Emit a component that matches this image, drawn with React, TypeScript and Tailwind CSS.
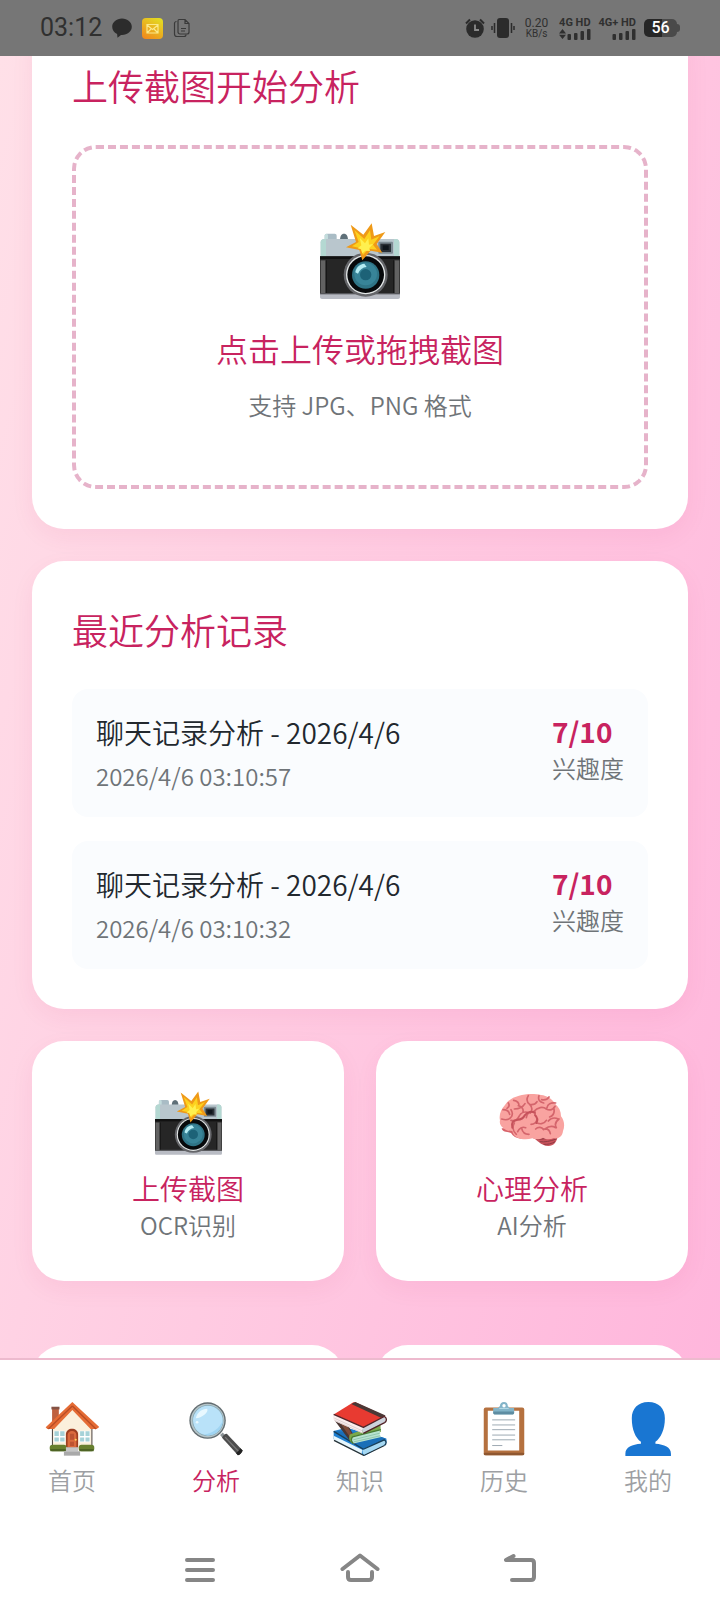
import type { ReactNode } from "react";

const RECORDS = [
    { id: 1, title: "聊天记录分析 - 2026/4/6", time: "2026/4/6 03:10:57", score: "7/10" },
    { id: 2, title: "聊天记录分析 - 2026/4/6", time: "2026/4/6 03:10:32", score: "7/10" },
];

const CameraIcon = ({ className }: { className: string }) => (
    <svg viewBox="0 0 240 228" className={className} aria-hidden="true">
        <rect x="14" y="32" width="36" height="30" rx="6" fill="#a9bcc5" />
        <rect x="14" y="32" width="10" height="30" rx="5" fill="#c3dcdc" />
        <path d="M60 52c0-12 4-20 12-20s12 8 12 20z" fill="#5f7079" />
        <path d="M2 58c0-6 4-10 10-10h216c6 0 10 4 10 10v44H2z" fill="#b9c6cd" />
        <path d="M2 58c0-6 4-10 10-10h6v54H2zM222 48h6c6 0 10 4 10 10v44h-16z" fill="#b4d8d2" />
        <rect x="0" y="100" width="240" height="114" fill="#262626" />
        <rect x="0" y="100" width="240" height="8" fill="#111" />
        <rect x="2" y="112" width="15" height="102" fill="#626262" />
        <rect x="223" y="112" width="15" height="102" fill="#626262" />
        <rect x="17" y="112" width="3" height="100" fill="#111" />
        <rect x="220" y="112" width="3" height="100" fill="#111" />
        <path d="M0 212h240v10c0 4-2 6-6 6H6c-4 0-6-2-6-6z" fill="#b9bcc4" />
        <rect x="0" y="210" width="240" height="4" fill="#55565a" />
        <rect x="175" y="56" width="44" height="36" rx="3" fill="#7d8b93" />
        <rect x="181" y="62" width="32" height="25" fill="#2a3036" />
        <rect x="188" y="67" width="18" height="14" fill="#0f161c" />
        <circle cx="137" cy="155" r="66" fill="#65666a" />
        <circle cx="137" cy="155" r="59" fill="#e4e8e8" />
        <circle cx="137" cy="155" r="55" fill="#07090b" />
        <circle cx="137" cy="156" r="41" fill="#2f7486" />
        <circle cx="137" cy="153" r="34" fill="#388498" />
        <circle cx="137" cy="155" r="17" fill="#1d6277" />
        <path d="M106 148c2-14 12-24 27-26l7 10c-12 1-21 8-26 20z" fill="#b5ecf3" />
        <path d="M92 5l38 30 25-34 7 38 34-12-26 36 17 26-35-6-25 29-9-31-40-8 30-16z" fill="#ef9a18" />
        <path d="M103 21l30 27 17-26 4 28 25-11-20 26 12 15-25-3-17 19-7-20-26-6 20-13z" fill="#fdd21f" />
        <path d="M119 44l16 17 10-15 2 19 13-3-12 13 2 9-14-1-9 8-4-12-10-3 11-9z" fill="#fff04f" />
    </svg>
);

const BrainIcon = ({ className }: { className: string }) => (
    <svg viewBox="0 0 198 192" className={className} aria-hidden="true">
        <path d="M100 140c14 4 24 24 48 25 16 0 26-12 28-30l-30-8z" fill="#c9535c" />
        <path d="M112 144c18 2 36-2 60-10M122 152c16 2 30-1 50-8M134 160c12 1 24-2 34-8" fill="none" stroke="#8e3a42" strokeWidth="3" />
        <path d="M8 112c2 12 16 10 28 14 6 10 16 16 30 17l-8-32z" fill="#d8636a" />
        <path d="M3 88C-1 72 6 54 18 42c10-16 26-24 42-28 20-6 48-6 66-2 18 2 34 12 42 26 12 10 18 22 18 38 10 12 12 30 6 44-2 16-12 24-28 22-12 4-22 4-32-2-10 6-22 6-32 2-14 4-32 4-44-2-10-4-14-10-16-20-10 0-22-2-28-10-8-6-11-14-9-22z" fill="#f9a3a0" />
        <path
            d="M12 56c10 0 18 4 20 14m-24 14c12 4 24 2 30-8 4-8 2-14-2-20M44 28c12 2 16 8 16 16m-14 10c14 0 26-6 32-16M58 44c10 2 16 10 14 18M88 14c-6 10-4 20 4 26 8 8 8 18 2 26m-2-26c10 2 18-2 22-8M120 14c-4 12 2 20 14 22m-6-10c10 2 18-2 22-8m20 18c-14-2-24 4-26 14m-40 12c12-14 28-16 38-8 10 6 22 2 26-8m-60 16c-14-2-24 6-26 18m-46 8c10 2 20-2 24-12 6-12 18-16 30-10m74-16c4 14-2 24-12 28m26 6c-12-6-24-2-30 6m32-6c-8 6-14 16-8 26M46 96c-6 12-4 26 6 34m28-20c-10-4-20 2-24 12m12-10c2 10 10 18 22 18m6-30c10 0 16-6 18-14m0 10c10 4 22 2 28-8m-32 26c8-8 18-6 24 2m0-2c12-2 18 4 20 14m-16-14c10-8 22-10 32-4M28 36c4 6 2 12-4 16"
            fill="none"
            stroke="#d4656c"
            strokeWidth="5"
            strokeLinecap="round"
        />
        <path d="M40 110c-4-14 2-22 16-24 12 0 18-6 22-14 8-10 20-12 30-6M112 96c6-10 2-18-4-24" fill="none" stroke="#c6525b" strokeWidth="6" strokeLinecap="round" />
    </svg>
);

const HouseIcon = () => (
    <svg viewBox="0 0 160 160" className="size-[54px]" aria-hidden="true">
        <path d="M21 16h20v36L21 72z" fill="#bf6140" />
        <path d="M19 14h24v8H19z" fill="#855344" />
        <path d="M22 72l59-58 58 58v72H22z" fill="#fbf0dc" />
        <path d="M22 144V74M139 144V74" stroke="#4c4440" strokeWidth="3" />
        <path d="M81 0l80 74-8 6h-18L81 24 27 80H7l-5-5z" fill="#e56c35" />
        <path d="M81 12L10 80M81 12l70 68" fill="none" stroke="#b94d26" strokeWidth="4" />
        <path d="M26 85h34v34H26zM102 85h32v34h-32z" fill="#fff" />
        <path d="M28 87h13v14H28zM45 87h13v14H45zM28 105h13v12H28zM45 105h13v12H45zM104 87h12v14h-12zM120 87h12v14h-12zM104 105h12v12h-12zM120 105h12v12h-12z" fill="#a6d2d8" />
        <path d="M62 136V96c0-22 36-22 36 0v40z" fill="#9e3f22" />
        <path d="M67 134V98c0-16 26-16 26 0v36z" fill="#db6a3d" />
        <path d="M74 94h12v18H74zM74 118h12v12H74z" fill="#bd5331" />
        <circle cx="91" cy="112" r="3" fill="#ffd45c" />
        <rect x="14" y="127" width="50" height="19" rx="8" fill="#68802f" />
        <rect x="100" y="127" width="46" height="19" rx="8" fill="#68802f" />
        <path d="M16 139h46v7H16zM102 139h42v7h-42z" fill="#4e6424" />
        <path d="M62 134h36v12H62z" fill="#c6c6c6" />
        <path d="M56 146h48v13H56z" fill="#a9a9a9" />
    </svg>
);

const MagnifierIcon = () => (
    <svg viewBox="0 0 160 160" className="size-[54px]" aria-hidden="true">
        <path d="M92 98l8-8 16 18-8 8z" fill="#8b9396" />
        <path d="M98 106c2-6 8-12 14-12l47 50c-2 6-8 13-14 14z" fill="#4d4d4d" />
        <path d="M107 104l45 48" stroke="#777" strokeWidth="4" />
        <path d="M139 151c4-2 12-9 13-14l7 7c-2 6-8 13-14 14z" fill="#222" />
        <circle cx="55" cy="55" r="54" fill="#626c70" />
        <circle cx="55" cy="55" r="50" fill="#b5c4c8" />
        <circle cx="56" cy="55" r="46" fill="#86a8b4" />
        <circle cx="56" cy="55" r="44" fill="#b9e2f9" />
        <path d="M56 99c24 0 44-20 44-44-10 24-30 38-56 42z" fill="#9fd4f2" />
        <path d="M20 48c4-17 18-28 34-28 5 10-16 28-34 28z" fill="#e8f8ff" />
        <circle cx="24" cy="60" r="4" fill="#e8f8ff" />
    </svg>
);

const BooksIcon = () => (
    <svg viewBox="0 0 160 160" className="size-[54px]" aria-hidden="true">
        <path d="M2 86l38-10 118 32c2 10 0 16-6 20l-58 31L2 110z" fill="#1f7fd0" />
        <path d="M2 86l86 54 68-32-40-14z" fill="#1a6fb8" />
        <path d="M2 100l86 42c-4 4-3 11 0 16L3 112z" fill="#e6f6fc" />
        <path d="M3 114l88 44 60-29" fill="none" stroke="#263238" strokeWidth="4" />
        <path d="M90 140l62-28c7 4 6 12 1 15l-61 29c-6-4-6-12-2-16z" fill="#a5d8f2" />
        <path d="M2 87l88 53M90 140l62-28c8 4 6 14 0 17" fill="none" stroke="#183e58" strokeWidth="4" />
        <path d="M6 56l46 62c-6-12 0-18 8-22L40 60z" fill="#4a3733" />
        <path d="M18 58l38 54 2-14-24-40z" fill="#7d4b39" />
        <path d="M50 96l90-34 2 26-84 34c-10-4-12-16-8-26z" fill="#7aa94a" />
        <path d="M58 102l84-20c-6 6-5 16 1 22l-82 19c-6-6-7-14-3-21z" fill="#b8e3cf" />
        <path d="M60 112l80-20M62 118l78-18" stroke="#7eb79f" strokeWidth="2" />
        <path d="M142 82l-84 21c-5 6-4 14 2 20" fill="none" stroke="#477c35" strokeWidth="4" />
        <path d="M2 37L58 2c4-2 8-1 12 0l86 40-66 34z" fill="#e83a31" />
        <path d="M66 0l90 40-14 7L54 6z" fill="#4b3836" />
        <path d="M2 37l88 38c-5 5-5 12-1 18L4 56C-1 50-1 42 2 37z" fill="#fbeeee" />
        <path d="M4 48l82 37M4 54l84 38" stroke="#cfc3c5" strokeWidth="2" />
        <path d="M90 75l62-31c6 4 6 12 1 16L90 92c-5-4-5-12 0-17z" fill="#cdd3dc" />
        <path d="M2 37l88 38 62-32c9 5 7 14 1 18L90 93" fill="none" stroke="#53252a" strokeWidth="4" strokeLinejoin="round" />
    </svg>
);

const ClipboardIcon = () => (
    <svg viewBox="0 0 160 160" className="size-[54px]" aria-hidden="true">
        <rect x="20" y="16" width="120" height="142" rx="6" fill="#b5713f" />
        <rect x="20" y="150" width="120" height="8" rx="4" fill="#8f5730" />
        <path d="M32 26h93v118H32z" fill="#fff" />
        <path d="M45 53h68M45 68h68M45 82h68M45 98h68M45 112h68M45 129h30" stroke="#8c9aa5" strokeWidth="2.5" />
        <path d="M80 0c8 0 12 6 11 12l6 6h13v12c0 4-2 6-6 6H54c-4 0-6-2-6-6V18h14l6-6C68 5 72 0 80 0z" fill="#83b4c8" />
        <path d="M48 28h62v3c0 4-2 6-6 6H54c-4 0-6-2-6-6z" fill="#5e8da2" />
        <circle cx="80" cy="11" r="5" fill="#fff" />
        <path d="M66 19h28" stroke="#b7dbe7" strokeWidth="3" />
    </svg>
);

const PersonIcon = () => (
    <svg viewBox="0 0 160 160" className="size-[54px]" aria-hidden="true">
        <path d="M81 0c32 0 49 20 49 48 0 34-12 58-28 70v6c26 2 46 10 46 29v7H13v-7c0-19 20-27 46-29v-6C43 106 32 82 32 48 32 20 50 0 81 0z" fill="#1976d2" />
    </svg>
);

const SignalBars = ({ arrows = false }: { arrows?: boolean }) => (
    <svg viewBox="0 0 32 11" className="h-[11px] w-8" fill="#2f2f2f" aria-hidden="true">
        {arrows && <path d="M3.5 0L7 4.5H0zM3.5 10L7 5.8H0z" />}
        <rect x="8.5" y="5" width="3.5" height="6" rx="1" />
        <rect x="15" y="4" width="3.5" height="7" rx="1" />
        <rect x="21.5" y="2" width="3.5" height="9" rx="1" />
        <rect x="28" y="0" width="3.5" height="11" rx="1" />
    </svg>
);

const StatusBar = () => (
    <header className="flex h-14 shrink-0 items-center justify-between bg-[#767676] px-10 font-[Roboto,sans-serif] font-normal text-[#303030]">
        <div className="flex items-center">
            <span className="text-[25px]">03:12</span>
            <svg viewBox="0 0 20 20" className="ml-2.5 size-5" aria-hidden="true">
                <path d="M10 .5c5.5 0 9.8 3.7 9.8 8.3S15.5 17 10 17H9l-3.5 2.7-.4-3.7C2 14.5.2 12 .2 8.8.2 4.2 4.5.5 10 .5z" fill="#2c2c2c" />
            </svg>
            <svg viewBox="0 0 21 21" className="ml-2.5 size-[21px]" aria-hidden="true">
                <defs>
                    <linearGradient id="mail" x1="0.8" y1="0" x2="0.2" y2="1">
                        <stop offset="0" stopColor="#e3dc22" />
                        <stop offset="1" stopColor="#f08b1d" />
                    </linearGradient>
                </defs>
                <rect width="21" height="21" rx="4" fill="url(#mail)" />
                <path d="M5 6.5h11v8.5H5zM5 7l5.5 4.5L16 7M5 15l4-4m7 4l-4-4" fill="none" stroke="#fbe98a" strokeWidth="1.2" />
            </svg>
            <svg viewBox="0 0 18 20" className="ml-2.5 h-5 w-[18px]" fill="none" stroke="#3a3a3a" strokeWidth="1.2" aria-hidden="true">
                <path d="M6 1.5h6l4 4V14a2 2 0 0 1-2 2H7a2 2 0 0 1-2-2V3a1.5 1.5 0 0 1 1-1.5zM12 1.5v4h4M8 10.5h5M8 13h4" />
                <path d="M3.5 3.5A2 2 0 0 0 1.5 5.5V16a2.5 2.5 0 0 0 2.5 2.5h7a2 2 0 0 0 2-2" />
            </svg>
        </div>
        <div className="flex items-center">
            <svg viewBox="0 0 20 20" className="size-5" aria-hidden="true">
                <circle cx="10" cy="11" r="8.8" fill="#2b2b2b" />
                <path d="M1 5.5L5 1.5M19 5.5l-4-4" stroke="#2b2b2b" strokeWidth="2" />
                <path d="M10 6.5V12h4" fill="none" stroke="#8a8a8a" strokeWidth="1.8" />
            </svg>
            <svg viewBox="0 0 24 20" className="ml-1.5 h-5 w-6" aria-hidden="true">
                <rect x="6" y="0" width="12" height="20" rx="3" fill="#2b2b2b" />
                <path d="M3.5 5v10M20.5 5v10M1 8v4M23 8v4" stroke="#2b2b2b" strokeWidth="1.5" />
            </svg>
            <div className="ml-2.5 flex w-6 flex-col items-center">
                <span className="text-xs leading-3">0.20</span>
                <span className="text-[10px] leading-[10px]">KB/s</span>
            </div>
            <div className="ml-2.5 flex flex-col items-end">
                <span className="text-[11px] leading-3 font-bold">4G HD</span>
                <SignalBars arrows />
            </div>
            <div className="ml-2 flex flex-col items-end">
                <span className="text-[11px] leading-3 font-bold">4G+ HD</span>
                <SignalBars />
            </div>
            <div className="ml-2 flex items-center">
                <span className="flex h-[18px] w-[33px] items-center justify-center rounded-[5px] bg-linear-to-r from-[#262626] from-55% to-[#4a4a4a] to-55% text-base font-medium text-white">
                    56
                </span>
                <span className="h-2 w-[3px] rounded-r-full bg-[#4a4a4a]" />
            </div>
        </div>
    </header>
);

const Card = ({ className = "", children }: { className?: string; children: ReactNode }) => (
    <section className={`rounded-[32px] bg-white p-10 shadow-[0_8px_24px_rgba(194,24,91,0.06)] ${className}`}>
        {children}
    </section>
);

const FEATURES = [
    { title: "上传截图", desc: "OCR识别", icon: <CameraIcon className="h-16 w-[67px]" /> },
    { title: "心理分析", desc: "AI分析", icon: <BrainIcon className="h-16 w-[66px]" /> },
];

const TABS = [
    { label: "首页", icon: <HouseIcon />, active: false },
    { label: "分析", icon: <MagnifierIcon />, active: true },
    { label: "知识", icon: <BooksIcon />, active: false },
    { label: "历史", icon: <ClipboardIcon />, active: false },
    { label: "我的", icon: <PersonIcon />, active: false },
];

const SYSTEM_KEYS = [
    { name: "菜单", d: "M7 10h26M7 20h26M7 30h26" },
    { name: "主屏幕", d: "M2.5 19L20 5.5 37.5 19M8 22v5q0 3 3 3h18q3 0 3-3v-5" },
    { name: "返回", d: "M13.5 6L6 10h25q3 0 3 3v14q0 3-3 3H12" },
];

const App = () => (
    <div className="flex h-screen flex-col bg-white font-['Noto_Sans_CJK_SC',sans-serif] font-[350]">
        <StatusBar />

        <main className="min-h-0 flex-1 overflow-hidden bg-[linear-gradient(105deg,#ffe0e8,#ffb6dc)] px-8">
            <Card className="-mt-[39px]">
                <h2 className="mb-8 text-4xl leading-14 text-[#c8235f]">上传截图开始分析</h2>
                <label className="flex cursor-pointer flex-col items-center rounded-3xl border-4 border-dashed border-[#e6b3ca] pt-[74px] pb-[62px]">
                    <CameraIcon className="h-[76px] w-20" />
                    <span className="mt-6 text-[32px] leading-[50px] text-[#c8235f]">点击上传或拖拽截图</span>
                    <span className="mt-3.5 text-2xl leading-9 text-[#6f7478]">支持 JPG、PNG 格式</span>
                    <input type="file" accept="image/png,image/jpeg" className="hidden" />
                </label>
            </Card>

            <Card className="mt-8">
                <h2 className="mb-8 text-4xl leading-14 text-[#c8235f]">最近分析记录</h2>
                <ul className="flex flex-col gap-6">
                    {RECORDS.map((r) => (
                        <li key={r.id} className="flex items-start justify-between rounded-2xl bg-[#fafcfe] px-6 py-[23px]">
                            <div>
                                <p className="text-[28px] leading-10 text-[#22282e]">{r.title}</p>
                                <p className="mt-1.5 text-2xl leading-9 text-[#6f7478]">{r.time}</p>
                            </div>
                            <div>
                                <p className="text-[28px] leading-[38px] font-bold text-[#c8235f]">{r.score}</p>
                                <p className="text-2xl leading-9 text-[#6f7478]">兴趣度</p>
                            </div>
                        </li>
                    ))}
                </ul>
            </Card>

            <div className="mt-8 grid grid-cols-2 gap-x-8 gap-y-16">
                {FEATURES.map((f) => (
                    <button
                        key={f.title}
                        type="button"
                        className="flex cursor-pointer flex-col items-center rounded-[32px] bg-white pt-[50px] pb-[38px] shadow-[0_8px_24px_rgba(194,24,91,0.06)]"
                    >
                        {f.icon}
                        <span className="mt-3.5 text-[28px] leading-[38px] text-[#c8235f]">{f.title}</span>
                        <span className="text-2xl leading-9 text-[#6f7478]">{f.desc}</span>
                    </button>
                ))}
                <div className="h-60 rounded-[32px] bg-white" />
                <div className="h-60 rounded-[32px] bg-white" />
            </div>
        </main>

        <nav className="grid shrink-0 grid-cols-5 border-t-2 border-[#edbace] bg-white pt-[42px] pb-[30px]">
            {TABS.map((t) => (
                <a key={t.label} href="#" className="flex flex-col items-center gap-1.5">
                    {t.icon}
                    <span className={["text-2xl leading-9", t.active ? "text-[#c8235f]" : "text-[#9d9fa3]"].join(" ")}>
                        {t.label}
                    </span>
                </a>
            ))}
        </nav>

        <div className="flex h-[84px] shrink-0 items-center justify-center bg-white">
            {SYSTEM_KEYS.map((k) => (
                <button key={k.name} type="button" aria-label={k.name} className="flex w-40 justify-center">
                    <svg
                        viewBox="0 0 40 40"
                        className="size-10"
                        fill="none"
                        stroke="#868686"
                        strokeWidth="4"
                        strokeLinecap="round"
                        strokeLinejoin="round"
                    >
                        <path d={k.d} />
                    </svg>
                </button>
            ))}
        </div>
    </div>
);

export default App;
